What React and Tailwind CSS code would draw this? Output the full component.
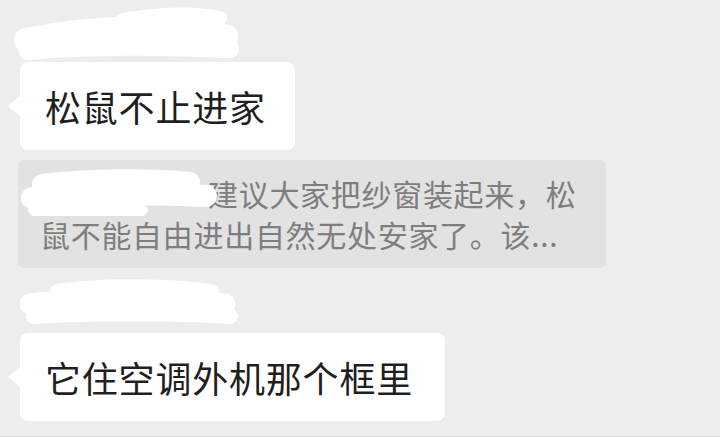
const cjk = { fontFamily: '"Noto Sans CJK SC", "Noto Sans", sans-serif' };

function Scribble({ className, strokes, width, height }) {
  return (
    <svg className={`block ${className}`} width={width} height={height} viewBox={`0 0 ${width} ${height}`} fill="none">
      <g stroke="#ffffff" strokeLinecap="round" strokeLinejoin="round" style={{ filter: 'blur(0.6px)' }}>
        {strokes.map((s, i) => (
          <path key={i} d={s.d} strokeWidth={s.w} />
        ))}
      </g>
    </svg>
  );
}

function Bubble({ children, width }) {
  return (
    <div className={`relative flex h-[88px] items-center rounded-[8px] bg-white pl-[25px] ${width}`}>
      <span className="absolute -left-[12px] top-1/2 -translate-y-1/2 border-y-[11px] border-r-[13px] border-y-transparent border-r-white" />
      <span className="text-[36px] leading-none tracking-[0.8px] text-[#1f1f1f]" style={cjk}>
        {children}
      </span>
    </div>
  );
}

export default function App() {
  return (
    <div className="h-[437px] w-[720px] overflow-hidden border-b border-[#d8d8d8] bg-[#ededed] pl-[20px]">
      <div className="relative z-10 h-[62px]">
        <Scribble
          className="-ml-[17px] pt-[5px]"
          width={250}
          height={62}
          strokes={[
            { d: 'M14 38 C70 28 160 26 232 34', w: 26 },
            { d: 'M16 50 C80 44 170 44 236 48', w: 20 },
            { d: 'M118 16 C160 8 200 8 226 14', w: 14 },
            { d: 'M40 28 C90 20 150 18 210 22', w: 16 },
          ]}
        />
      </div>

      <Bubble width="w-[275px]">松鼠不止进家</Bubble>

      <div
        className="relative -ml-[2px] mt-[10px] flex h-[108px] w-[588px] flex-col justify-center rounded-[6px] bg-[#e2e2e2] pl-[22px] text-[30px] leading-[41px] text-[#7e7e7e]"
        style={cjk}
      >
        <div className="pl-[168px] tracking-[0.7px]">建议大家把纱窗装起来，松</div>
        <div className="tracking-[0.7px]">鼠不能自由进出自然无处安家了。该...</div>
        <Scribble
          className="absolute -left-[6px] top-[6px]"
          width={205}
          height={56}
          strokes={[
            { d: 'M30 18 C80 12 140 12 178 16', w: 20 },
            { d: 'M20 32 C70 28 140 28 194 30', w: 22 },
            { d: 'M22 44 C50 44 90 44 130 44', w: 12 },
          ]}
        />
      </div>

      <div className="relative z-10 h-[65px]">
        <Scribble
          className="-ml-[17px] pt-[8px]"
          width={255}
          height={62}
          strokes={[
            { d: 'M44 18 C100 10 170 12 220 18', w: 18 },
            { d: 'M12 32 C70 26 160 26 236 32', w: 24 },
            { d: 'M16 46 C80 42 180 42 242 46', w: 18 },
          ]}
        />
      </div>

      <Bubble width="w-[425px]">它住空调外机那个框里</Bubble>
    </div>
  );
}
